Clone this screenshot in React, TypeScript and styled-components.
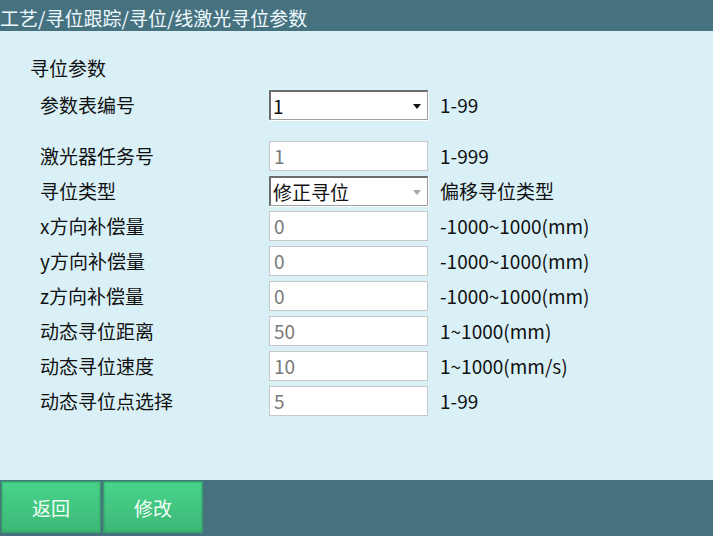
import styled, { createGlobalStyle } from 'styled-components';

const GlobalStyle = createGlobalStyle`
  html, body {
    margin: 0;
    padding: 0;
  }
  body {
    font-family: "Microsoft YaHei", "Noto Sans CJK SC", "Noto Sans", sans-serif;
    background: #d9f0f7;
  }
`;

type Field = {
  label: string;
  kind: 'select' | 'input';
  value: string;
  hint: string;
  disabled?: boolean;
};

const fields: Field[] = [
  { label: '激光器任务号', kind: 'input', value: '1', hint: '1-999' },
  { label: '寻位类型', kind: 'select', value: '修正寻位', hint: '偏移寻位类型', disabled: true },
  { label: 'x方向补偿量', kind: 'input', value: '0', hint: '-1000~1000(mm)' },
  { label: 'y方向补偿量', kind: 'input', value: '0', hint: '-1000~1000(mm)' },
  { label: 'z方向补偿量', kind: 'input', value: '0', hint: '-1000~1000(mm)' },
  { label: '动态寻位距离', kind: 'input', value: '50', hint: '1~1000(mm)' },
  { label: '动态寻位速度', kind: 'input', value: '10', hint: '1~1000(mm/s)' },
  { label: '动态寻位点选择', kind: 'input', value: '5', hint: '1-99' },
];

const Page = styled.div`
  width: 713px;
  height: 536px;
  display: flex;
  flex-direction: column;
  background: #d9f0f7;
  overflow: hidden;
`;

const Header = styled.header`
  height: 31px;
  flex: none;
  box-sizing: border-box;
  padding-top: 5px;
  background: #46727f;
  color: #eef9ff;
  font-size: 19px;
  line-height: 26px;
  white-space: nowrap;
`;

const Main = styled.main`
  flex: 1;
  padding: 25px 0 0 30px;
  color: #111;
`;

const SectionTitle = styled.div`
  font-size: 19px;
  line-height: 24px;
  height: 24px;
`;

const Grid = styled.div`
  display: grid;
  grid-template-columns: 217px 159px auto;
  column-gap: 12px;
  row-gap: 5px;
  padding-left: 10px;
  align-items: center;
`;

const FirstGrid = styled(Grid)`
  margin-top: 10px;
  margin-bottom: 21px;
`;

const Label = styled.div`
  font-size: 19px;
  line-height: 30px;
  white-space: nowrap;
`;

const Hint = styled.div`
  font-size: 19px;
  line-height: 30px;
  white-space: nowrap;
  color: #111;
`;

const InputBox = styled.div`
  box-sizing: border-box;
  height: 30px;
  background: #fff;
  border: 1px solid #c6c8ca;
  padding-left: 4px;
  font-size: 19px;
  line-height: 28px;
  color: #7a7a7a;
`;

const SelectBox = styled.div`
  box-sizing: border-box;
  height: 30px;
  background: #fff;
  border-top: 2px solid #6c6c6c;
  border-left: 2px solid #6c6c6c;
  border-right: 1px solid #a0a0a0;
  border-bottom: 1px solid #a0a0a0;
  box-shadow: 1px 1px 0 #ffffff;
  display: flex;
  align-items: center;
  justify-content: space-between;
  padding: 0 6px 0 2px;
  font-size: 19px;
  color: #111;
`;

const Arrow = styled.span<{ $disabled?: boolean }>`
  width: 0;
  height: 0;
  border-left: 4px solid transparent;
  border-right: 4px solid transparent;
  border-top: 5px solid ${(p) => (p.$disabled ? '#a9a9a9' : '#111')};
  margin-top: 2px;
`;

const Footer = styled.footer`
  height: 56px;
  flex: none;
  background: #46727f;
  display: flex;
  gap: 2px;
  padding: 1px 0 0 1px;
  box-sizing: border-box;
`;

const Button = styled.button`
  width: 100px;
  height: 52px;
  border: 1px solid #3a9d6b;
  box-shadow: inset 0 0 2px #2f8a5c;
  background: linear-gradient(#47d48b, #3db876);
  color: #f2fff8;
  font-family: inherit;
  font-size: 19px;
  padding: 0;
`;

const Control = ({ field }: { field: Field }) =>
  field.kind === 'select' ? (
    <SelectBox>
      <span>{field.value}</span>
      <Arrow $disabled={field.disabled} />
    </SelectBox>
  ) : (
    <InputBox>{field.value}</InputBox>
  );

export default function App() {
  return (
    <>
      <GlobalStyle />
      <Page>
        <Header>工艺/寻位跟踪/寻位/线激光寻位参数</Header>
        <Main>
          <SectionTitle>寻位参数</SectionTitle>
          <FirstGrid>
            <Label>参数表编号</Label>
            <Control field={{ label: '参数表编号', kind: 'select', value: '1', hint: '1-99' }} />
            <Hint>1-99</Hint>
          </FirstGrid>
          <Grid>
            {fields.flatMap((f) => [
              <Label key={f.label + '-l'}>{f.label}</Label>,
              <Control key={f.label + '-c'} field={f} />,
              <Hint key={f.label + '-h'}>{f.hint}</Hint>,
            ])}
          </Grid>
        </Main>
        <Footer>
          <Button>返回</Button>
          <Button>修改</Button>
        </Footer>
      </Page>
    </>
  );
}
